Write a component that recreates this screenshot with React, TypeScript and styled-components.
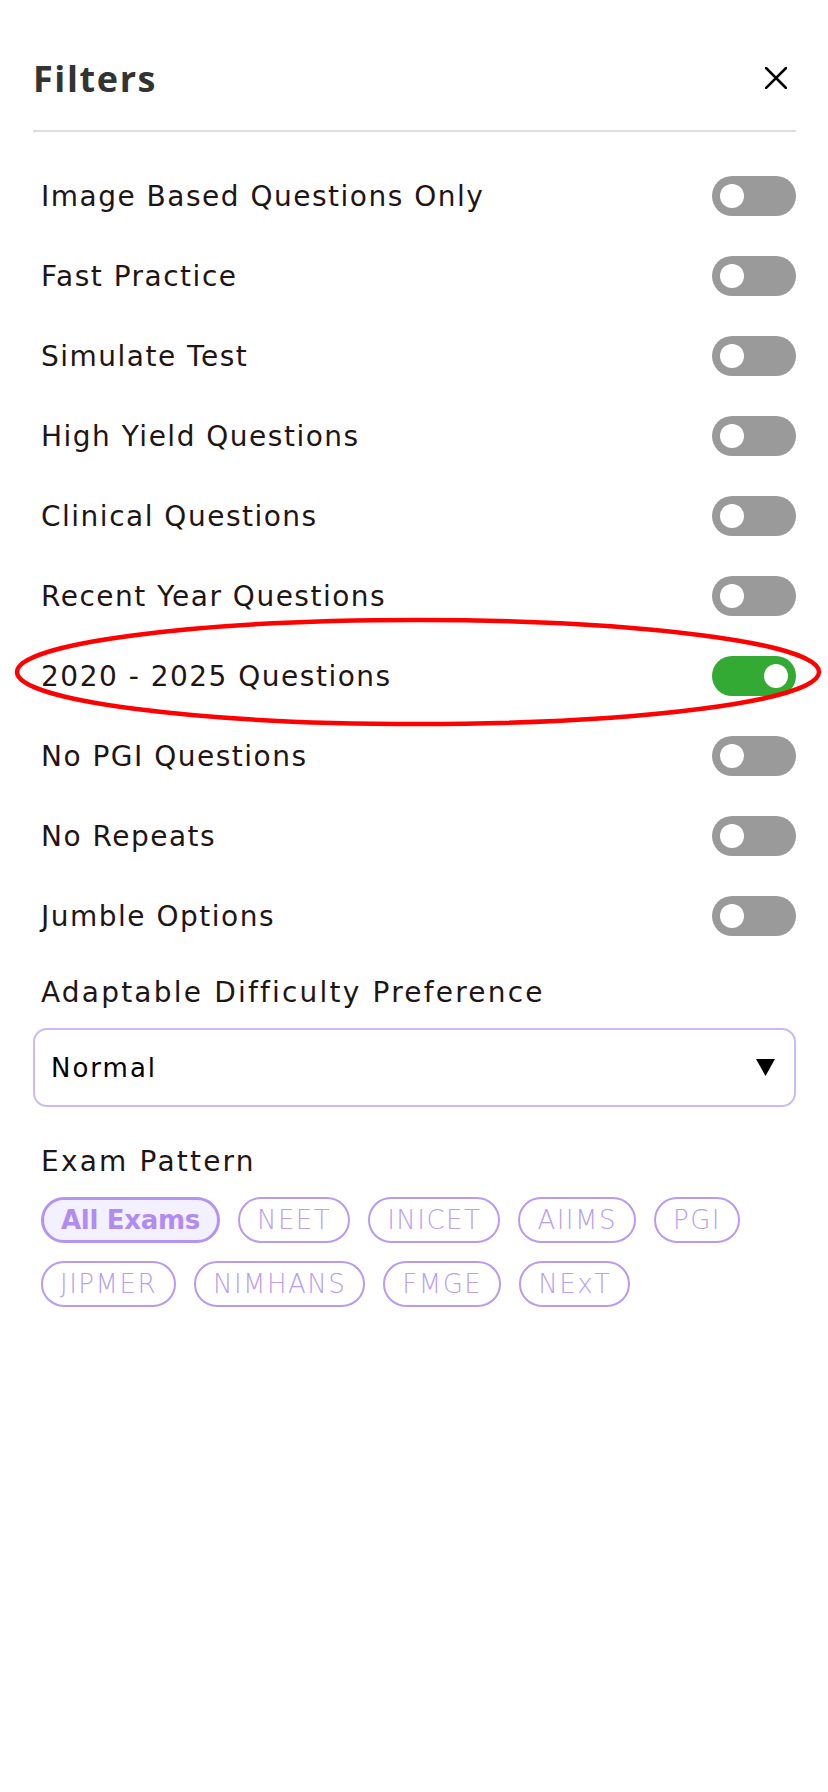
import React, { useState } from 'react';
import styled, { createGlobalStyle } from 'styled-components';

const GlobalStyle = createGlobalStyle`
  html, body {
    margin: 0;
    padding: 0;
    background: #ffffff;
  }
  body {
    font-family: 'DejaVu Sans', 'Open Sans', Arial, sans-serif;
  }
`;

const Page = styled.div`
  position: relative;
  min-height: 1792px;
  padding: 0 32px 0 33px;
  box-sizing: border-box;
  background: #fff;
`;

const Header = styled.div`
  display: flex;
  align-items: center;
  justify-content: space-between;
  height: 56px;
  padding-top: 50px;
`;

const Title = styled.h1`
  margin: 0;
  font-family: 'Open Sans', 'Noto Sans', sans-serif;
  font-size: 36px;
  font-weight: 700;
  color: #333333;
  letter-spacing: 1.6px;
`;

const CloseButton = styled.button`
  display: flex;
  align-items: center;
  justify-content: center;
  width: 22px;
  height: 22px;
  margin-right: 9px;
  padding: 0;
  border: none;
  background: transparent;
  cursor: pointer;
`;

const Divider = styled.div`
  height: 2px;
  margin-top: 24px;
  background: #dddddd;
`;

const List = styled.div`
  display: flex;
  flex-direction: column;
  margin-top: 24px;
`;

const Row = styled.div`
  display: flex;
  align-items: center;
  justify-content: space-between;
  height: 80px;
  padding-left: 8px;
`;

const Label = styled.span`
  font-size: 28px;
  font-weight: 400;
  color: #1f1515;
  letter-spacing: 1.5px;
`;

const Toggle = styled.button<{ $on: boolean }>`
  position: relative;
  width: 84px;
  height: 40px;
  padding: 0;
  border: none;
  border-radius: 20px;
  background: ${p => (p.$on ? '#33aa33' : '#9a9a9a')};
  cursor: pointer;

  &::after {
    content: '';
    position: absolute;
    top: 8px;
    left: ${p => (p.$on ? '52px' : '8px')};
    width: 24px;
    height: 24px;
    border-radius: 50%;
    background: #ffffff;
  }
`;

const SectionLabel = styled.div<{ $top: number }>`
  margin-top: ${p => p.$top}px;
  padding-left: 8px;
  font-size: 28px;
  line-height: 34px;
  color: #1f1515;
  letter-spacing: 2.2px;
`;

const SelectBox = styled.div`
  display: flex;
  align-items: center;
  justify-content: space-between;
  height: 79px;
  margin-top: 18px;
  padding: 0 19px 0 16px;
  border: 2px solid #cbbaf7;
  border-radius: 14px;
  box-sizing: border-box;
  cursor: pointer;
`;

const SelectValue = styled.span`
  font-size: 26px;
  font-weight: 400;
  color: #000000;
  letter-spacing: 2px;
`;

const Chips = styled.div`
  display: flex;
  flex-wrap: wrap;
  gap: 18px;
  margin-top: 18px;
  padding-left: 8px;
`;

const Chip = styled.button<{ $active: boolean }>`
  height: 46px;
  padding: 0 17px;
  box-sizing: border-box;
  border-radius: 23px;
  border: ${p => (p.$active ? '3px solid #b593f2' : '2px solid #b99bf1')};
  background: ${p => (p.$active ? '#f3f0ff' : '#ffffff')};
  color: ${p => (p.$active ? '#b08cf0' : '#b9a0f2')};
  font-family: 'DejaVu Sans', 'Open Sans', sans-serif;
  font-size: 26px;
  font-weight: ${p => (p.$active ? 700 : 200)};
  letter-spacing: ${p => (p.$active ? '-0.3px' : '1.5px')};
  line-height: 1;
  cursor: pointer;
`;

const Annotation = styled.svg`
  position: absolute;
  left: 0;
  top: 0;
  pointer-events: none;
`;

const filters = [
  'Image Based Questions Only',
  'Fast Practice',
  'Simulate Test',
  'High Yield Questions',
  'Clinical Questions',
  'Recent Year Questions',
  '2020 - 2025 Questions',
  'No PGI Questions',
  'No Repeats',
  'Jumble Options',
];

const exams = ['All Exams', 'NEET', 'INICET', 'AIIMS', 'PGI', 'JIPMER', 'NIMHANS', 'FMGE', 'NExT'];

const App: React.FC = () => {
  const [on, setOn] = useState<Record<string, boolean>>({ '2020 - 2025 Questions': true });
  const [exam, setExam] = useState('All Exams');

  return (
    <Page>
      <GlobalStyle />
      <Header>
        <Title>Filters</Title>
        <CloseButton aria-label="Close">
          <svg width="22" height="22" viewBox="0 0 22 22">
            <path d="M1 1 L21 21 M21 1 L1 21" stroke="#000" strokeWidth="2.6" strokeLinecap="square" />
          </svg>
        </CloseButton>
      </Header>
      <Divider />
      <List>
        {filters.map(f => (
          <Row key={f}>
            <Label>{f}</Label>
            <Toggle $on={!!on[f]} onClick={() => setOn({ ...on, [f]: !on[f] })} />
          </Row>
        ))}
      </List>
      <SectionLabel $top={20}>Adaptable Difficulty Preference</SectionLabel>
      <SelectBox>
        <SelectValue>Normal</SelectValue>
        <svg width="19" height="17" viewBox="0 0 19 17">
          <path d="M0 0 H19 L9.5 17 Z" fill="#000" />
        </svg>
      </SelectBox>
      <SectionLabel $top={38}>Exam Pattern</SectionLabel>
      <Chips>
        {exams.map(e => (
          <Chip key={e} $active={exam === e} onClick={() => setExam(e)}>
            {e}
          </Chip>
        ))}
      </Chips>
      <Annotation width="828" height="1792" viewBox="0 0 828 1792">
        <ellipse cx="418" cy="672" rx="401" ry="52" fill="none" stroke="#ff0000" strokeWidth="4.5" />
      </Annotation>
    </Page>
  );
};

export default App;
